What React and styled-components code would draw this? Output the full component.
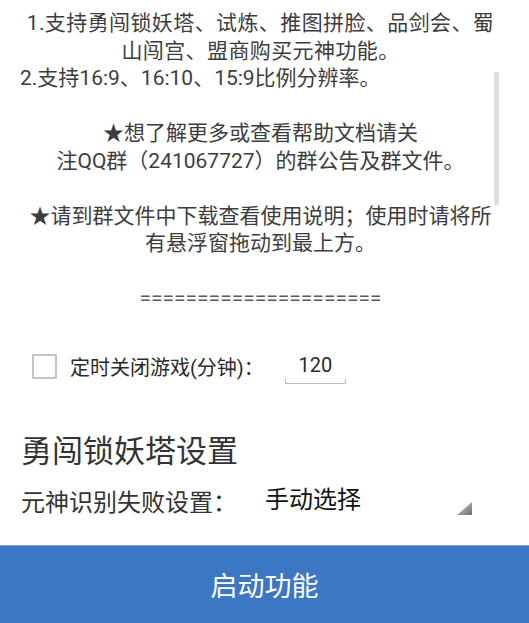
import React, { useState } from "react";
import styled, { createGlobalStyle } from "styled-components";

const GlobalStyle = createGlobalStyle`
  html, body {
    margin: 0;
    padding: 0;
    background: #ffffff;
  }
  body {
    font-family: "Roboto", "Noto Sans CJK SC", sans-serif;
  }
`;

const notes = [
  { text: "2.支持16:9、16:10、15:9比例分辨率。", align: "left" },
  { text: "", align: "center" },
  { text: "★想了解更多或查看帮助文档请关", align: "center" },
  { text: "注QQ群（241067727）的群公告及群文件。", align: "center" },
  { text: "", align: "center" },
  { text: "★请到群文件中下载查看使用说明；使用时请将所", align: "center" },
  { text: "有悬浮窗拖动到最上方。", align: "center" },
  { text: "", align: "center" },
  { text: "=".repeat(21), align: "center", muted: true },
];

const App = () => {
  const [timerOn, setTimerOn] = useState(false);

  return (
    <Screen>
      <GlobalStyle />
      <Intro>
        1.支持勇闯锁妖塔、试炼、推图拼脸、品剑会、蜀
        <br />
        山闯宫、盟商购买元神功能。
      </Intro>

      <ScrollBox>
        {notes.map((line, i) => (
          <NoteLine key={i} $align={line.align} $muted={line.muted}>
            {line.text || "\u00a0"}
          </NoteLine>
        ))}
        <Thumb />
      </ScrollBox>

      <CheckRow>
        <CheckBox
          $checked={timerOn}
          onClick={() => setTimerOn(!timerOn)}
          aria-label="定时关闭游戏"
        />
        <CheckLabel>定时关闭游戏(分钟)：</CheckLabel>
        <Field>120</Field>
      </CheckRow>

      <SectionTitle>勇闯锁妖塔设置</SectionTitle>

      <SettingRow>
        <SettingLabel>元神识别失败设置：</SettingLabel>
        <Spinner>
          <SpinnerValue>手动选择</SpinnerValue>
          <SpinnerArrow width="15" height="13" viewBox="0 0 15 13">
            <defs>
              <linearGradient id="arrowFill" x1="0" y1="0" x2="1" y2="1">
                <stop offset="0" stopColor="#cfcfcf" />
                <stop offset="1" stopColor="#707070" />
              </linearGradient>
            </defs>
            <polygon points="15,0 15,13 0,13" fill="url(#arrowFill)" />
          </SpinnerArrow>
        </Spinner>
      </SettingRow>

      <StartButton type="button">启动功能</StartButton>
    </Screen>
  );
};

export default App;

// Styled-components

const Screen = styled.div`
  width: 529px;
  height: 623px;
  display: flex;
  flex-direction: column;
  background: #ffffff;
  overflow: hidden;
`;

const Intro = styled.div`
  padding: 10px 12px 0 4px;
  font-size: 21px;
  letter-spacing: 0.4px;
  line-height: 27.5px;
  color: #3d3d3d;
  text-align: center;
  white-space: nowrap;
`;

const ScrollBox = styled.div`
  position: relative;
  height: 277px;
  overflow: hidden;
`;

const NoteLine = styled.div`
  padding: ${(p) => (p.$align === "left" ? "0 0 0 20px" : "0 12px 0 4px")};
  text-align: ${(p) => p.$align};
  font-size: 21px;
  line-height: 27.5px;
  color: ${(p) => (p.$muted ? "#5a5a5a" : "#3d3d3d")};
  white-space: nowrap;
`;

const Thumb = styled.div`
  position: absolute;
  top: 7px;
  left: 494px;
  width: 5px;
  height: 133px;
  background: #dedede;
`;

const CheckRow = styled.div`
  height: 48px;
  display: flex;
  align-items: center;
  padding-left: 32px;
`;

const CheckBox = styled.div`
  width: 21px;
  height: 21px;
  border: 2px solid #c4c4c4;
  border-radius: 1px;
  background: ${(p) => (p.$checked ? "#3b77c3" : "#ffffff")};
  cursor: pointer;
`;

const CheckLabel = styled.span`
  margin-left: 13px;
  font-size: 20px;
  color: #2a2a2a;
`;

const Field = styled.div`
  position: relative;
  width: 61px;
  height: 34px;
  margin: 2px 0 0 21px;
  font-size: 20px;
  line-height: 30px;
  color: #2a2a2a;
  text-align: center;

  &::after {
    content: "";
    position: absolute;
    left: 0;
    right: 0;
    bottom: 0;
    height: 4px;
    border: 1px solid #bdbdbd;
    border-top: none;
  }
`;

const SectionTitle = styled.h2`
  margin: 42px 0 0;
  padding-left: 21px;
  font-size: 31px;
  font-weight: normal;
  line-height: 40px;
  color: #333333;
`;

const SettingRow = styled.div`
  height: 40px;
  margin-top: 8px;
  display: flex;
  align-items: center;
  padding-left: 21px;
`;

const SettingLabel = styled.span`
  font-size: 24px;
  color: #333333;
`;

const Spinner = styled.div`
  width: 220px;
  height: 40px;
  margin-left: 18px;
  padding: 0 3px 5px 10px;
  box-sizing: border-box;
  display: flex;
  align-items: center;
`;

const SpinnerValue = styled.span`
  font-size: 24px;
  color: #111111;
`;

const SpinnerArrow = styled.svg`
  margin-left: auto;
  align-self: flex-end;
`;

const StartButton = styled.button`
  margin-top: auto;
  height: 78px;
  width: 100%;
  border: none;
  border-top: 1px solid #7ea4d6;
  background: #3b77c3;
  color: #ffffff;
  font-family: "Roboto", "Noto Sans CJK SC", sans-serif;
  font-size: 27px;
  cursor: pointer;
`;
